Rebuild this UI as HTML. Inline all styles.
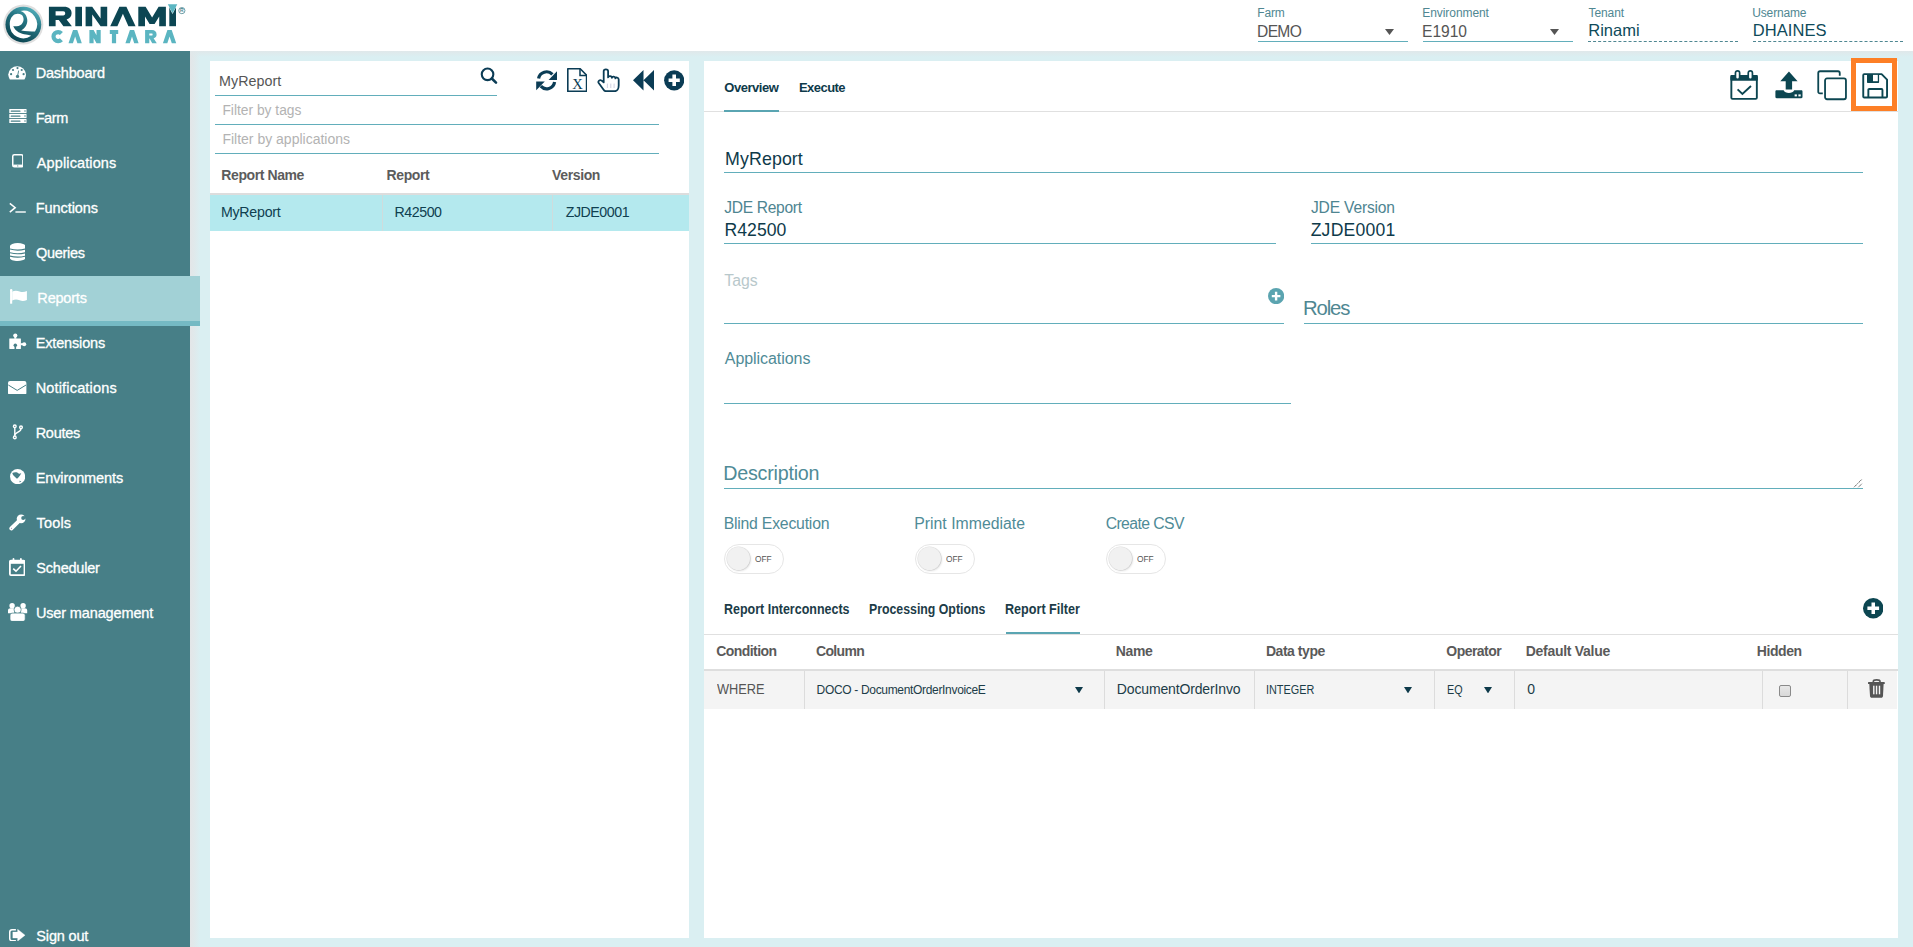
<!DOCTYPE html>
<html><head><meta charset="utf-8"><title>Rinami Cantara - Reports</title>
<style>
html,body{margin:0;padding:0;width:1913px;height:947px;overflow:hidden;background:#fff;font-family:"Liberation Sans",sans-serif;}
.t{position:absolute;white-space:nowrap;line-height:1.15;}
</style></head><body>
<div style="position:absolute;left:0px;top:0px;width:1913px;height:51px;background:#fff;"></div>
<div style="position:absolute;left:190px;top:51px;width:1723px;height:896px;background:#daeff2;"></div>
<div style="position:absolute;left:190px;top:51px;width:10px;height:896px;background:linear-gradient(90deg,#e3e6e8 0%,#e0e9eb 40%,#daeff2 100%);"></div>
<div style="position:absolute;left:190px;top:51px;width:1723px;height:6px;background:linear-gradient(180deg,#e0e8ea,rgba(218,239,242,0));"></div>
<div style="position:absolute;left:0px;top:51px;width:190px;height:896px;background:#477f87;"></div>
<div style="position:absolute;left:0px;top:276px;width:200px;height:45px;background:#a2d1d6;"></div>
<div style="position:absolute;left:0px;top:321px;width:200px;height:5px;background:#75bac4;"></div>
<div style="position:absolute;left:210px;top:61px;width:479px;height:877px;background:#fff;"></div>
<div style="position:absolute;left:704px;top:61px;width:1194px;height:877px;background:#fff;"></div>
<div style="position:absolute;left:1258px;top:41px;width:150px;height:1px;background:#62aebb;"></div>
<div style="position:absolute;left:1423px;top:41px;width:150px;height:1px;background:#62aebb;"></div>
<div style="position:absolute;left:1588px;top:41px;width:150px;height:0;border-top:1px dashed #4f8792"></div>
<div style="position:absolute;left:1753px;top:41px;width:150px;height:0;border-top:1px dashed #4f8792"></div>
<svg style="position:absolute;left:1385px;top:29px;" width="9" height="6" viewBox="0 0 9 6"><path d="M0 0H9L4.5 6Z" fill="#555"/></svg>
<svg style="position:absolute;left:1550px;top:29px;" width="9" height="6" viewBox="0 0 9 6"><path d="M0 0H9L4.5 6Z" fill="#555"/></svg>
<svg style="position:absolute;left:0px;top:0px;" width="190" height="51" viewBox="0 0 190 51">
<defs><linearGradient id="lg" x1="0.8" y1="0" x2="0.25" y2="1"><stop offset="0" stop-color="#56b6c2"/><stop offset="0.4" stop-color="#267684"/><stop offset="1" stop-color="#083f4b"/></linearGradient></defs>
<circle cx="23.35" cy="24.55" r="20" fill="#dfdfdf"/>
<circle cx="23.35" cy="24.55" r="17.9" fill="url(#lg)"/>
<path fill="#fff" d="M21.5 14.8 C24.2 16.8 24.4 21.6 21.6 24.2 C19.6 26 16.4 26.6 13.2 26.3 C15.5 31.5 21 34.2 26 34.6 C28 34.8 29.8 35.2 31.2 35.8 A13.6 13.6 0 0 1 9.75 24.5 C9.75 19 12 15.5 15 14.2 C17.2 13.3 19.8 13.6 21.5 14.8Z"/>
<path fill="#fff" d="M20.5 11 A13.6 13.6 0 0 1 35 31.5 C31 31.4 25.5 31 21.2 30.4 C25.2 28.4 27.6 24.2 27.3 20 C27 15.6 24.5 12 20.5 11Z"/>
<g fill="#0c4653" fill-rule="evenodd">
<path d="M48.9 6.8 H64 C68.8 6.8 71.6 9.4 71.6 13.2 C71.6 16.4 69.6 18.6 66.6 19.4 L71.9 26.2 H63.4 L58.8 19.9 H55.6 V26.2 H48.9 Z M55.6 11.2 H63.2 C64.6 11.2 65.2 12 65.2 13.3 C65.2 14.6 64.6 15.4 63.2 15.4 H55.6 Z"/>
<rect x="75.3" y="6.8" width="6.7" height="19.4"/>
<path d="M85.6 26.2 V6.8 H92.2 L100.6 18.5 V6.8 H107.2 V26.2 H100.6 L92.2 14.5 V26.2 Z"/>
<path d="M110.2 26.2 L119.4 6.8 H126.4 L135.6 26.2 H128.4 L122.9 13.8 L117.4 26.2 Z"/>
<path d="M138.3 26.2 V6.8 H145.6 L152.1 17.5 L158.6 6.8 H165.9 V26.2 H159.2 V16.5 L154.6 24 H149.6 L145 16.5 V26.2 Z"/>
<rect x="169.3" y="6.8" width="6.7" height="19.4"/>
</g>
<path d="M167.2 3.6 H177.9 L172.55 13.9 Z" fill="#fff"/>
<path d="M167.8 4.2 H177.3 L172.55 13.3 Z" fill="#5bb6c2"/>
<circle cx="181.85" cy="10.6" r="3.1" fill="none" stroke="#4a8590" stroke-width="0.8"/>
<text x="181.85" y="12.4" text-anchor="middle" font-family="Liberation Sans" font-weight="700" font-size="5" fill="#4a8590">R</text>
<g fill="#5bb5c1" fill-rule="evenodd">
<path d="M61.4 33.5 A4.55 4.55 0 1 0 61.4 39.7" fill="none" stroke="#5bb5c1" stroke-width="4.2"/>
<path d="M68.5 43.2 L73 30 H77.3 L81.8 43.2 H77.4 L75.15 36.4 L72.9 43.2 Z"/>
<path d="M89.4 43.2 V30 H93.6 L96.5 35.2 V30 H100.7 V43.2 H96.5 L93.6 38 V43.2 Z"/>
<path d="M109.8 30 H118.2 V34 H116.1 V43.2 H111.9 V34 H109.8 Z"/>
<path d="M125.4 43.2 L129.9 30 H134.1 L138.6 43.2 H134.2 L132 36.4 L129.8 43.2 Z"/>
<path d="M145.1 30 H152 C154.8 30 156.6 31.8 156.6 34.4 C156.6 36.4 155.4 37.8 153.6 38.3 L156.8 43.2 H152.2 L149.6 38.6 H149.3 V43.2 H145.1 Z M149.3 33.4 H151.8 C152.4 33.4 152.6 33.8 152.6 34.4 C152.6 35 152.4 35.4 151.8 35.4 H149.3 Z"/>
<path d="M162.9 43.2 L167.4 30 H171.7 L176.2 43.2 H171.8 L169.55 36.4 L167.3 43.2 Z"/>
</g>
</svg>
<svg style="position:absolute;left:8px;top:65px;" width="19" height="15" viewBox="0 0 19 15"><path d="M1.9 14.5 C0.9 13 0.3 11.2 0.3 9.2 A8.9 8.9 0 0 1 18 9.2 C18 11.2 17.4 13 16.4 14.5 Z" fill="#fff"/><g fill="#477f87"><circle cx="5" cy="5" r="1.1"/><circle cx="9.5" cy="3.1" r="1.1"/><circle cx="13.7" cy="5" r="1.1"/><circle cx="3.1" cy="9.2" r="1.1"/><circle cx="15.6" cy="9.2" r="1.1"/><circle cx="9.5" cy="11.4" r="1.65"/><path d="M9 11.4 L10.2 5.6 L11 5.8 L10 11.6Z"/></g></svg>
<svg style="position:absolute;left:8.5px;top:108.8px;" width="18" height="14.5" viewBox="0 0 18 14.5"><rect x="0.3" y="0" width="17.2" height="4.1" fill="#fff"/><rect x="1.7" y="1.55" width="9.8" height="1.1" rx="0.5" fill="#477f87"/><circle cx="16" cy="2.1" r="0.75" fill="#477f87"/><rect x="0.3" y="5" width="17.2" height="4.1" fill="#fff"/><rect x="1.7" y="6.55" width="9.8" height="1.1" rx="0.5" fill="#477f87"/><circle cx="16" cy="7.1" r="0.75" fill="#477f87"/><rect x="0.3" y="10" width="17.2" height="4.1" fill="#fff"/><rect x="1.7" y="11.55" width="9.8" height="1.1" rx="0.5" fill="#477f87"/><circle cx="16" cy="12.1" r="0.75" fill="#477f87"/></svg>
<svg style="position:absolute;left:11.6px;top:154.3px;" width="11.6" height="13.6" viewBox="0 0 11.6 13.6"><rect x="0.75" y="0.75" width="10.1" height="12.1" rx="1.6" fill="none" stroke="#fff" stroke-width="1.5"/><rect x="1.2" y="10.6" width="9.2" height="2.4" fill="#fff"/><circle cx="5.8" cy="11.9" r="0.55" fill="#477f87"/></svg>
<svg style="position:absolute;left:9px;top:202px;" width="17" height="12" viewBox="0 0 17 12"><path d="M0.8 1.3 L6.2 5.7 L0.8 10.1" fill="none" stroke="#fff" stroke-width="1.5"/><rect x="6.4" y="9.3" width="10.4" height="1.4" fill="#fff"/></svg>
<svg style="position:absolute;left:9.5px;top:242.9px;" width="15.4" height="18" viewBox="0 0 15.4 18"><path d="M0 3 A7.7 3 0 0 1 15.4 3 V15.2 C15.4 16.8 12 17.9 7.7 17.9 C3.4 17.9 0 16.8 0 15.2 Z" fill="#fff"/><g fill="none" stroke="#477f87" stroke-width="1.1"><path d="M-0.2 5.9 Q7.7 8.3 15.6 5.9"/><path d="M-0.2 9.7 Q7.7 11.7 15.6 9.7"/><path d="M-0.2 13.1 Q7.7 15.1 15.6 13.1"/></g></svg>
<svg style="position:absolute;left:10.2px;top:289.4px;" width="17.5" height="15" viewBox="0 0 17.5 15"><rect x="0.1" y="1" width="2.1" height="13.7" fill="#fff"/><circle cx="1.15" cy="1.3" r="1.25" fill="#fff"/><path d="M2.2 2.4 C4.8 1.3 7.4 1.5 9.6 2.4 C12 3.4 14.5 3.2 16.9 1.9 V10.9 C14.5 12.2 12 12.3 9.6 11.3 C7.4 10.4 4.8 10.3 2.2 11.4 Z" fill="#fff"/></svg>
<svg style="position:absolute;left:8.8px;top:332.5px;" width="18" height="16.5" viewBox="0 0 18 16.5"><g fill="#fff"><rect x="0.3" y="5.4" width="11.6" height="10.5" rx="0.4"/><circle cx="6.3" cy="2.5" r="2.1"/><rect x="5.3" y="3.5" width="2" height="2.2"/><circle cx="15.2" cy="11.2" r="2"/><rect x="11.6" y="10.2" width="2.4" height="2"/></g><g fill="#477f87"><circle cx="6.3" cy="12.3" r="1.75"/><rect x="5.5" y="12.6" width="1.6" height="3.6"/></g></svg>
<svg style="position:absolute;left:8.2px;top:380.7px;" width="18.4" height="13.8" viewBox="0 0 18.4 13.8"><rect x="0" y="0" width="18.4" height="13.8" rx="2" fill="#fff"/><path d="M0.3 4 L9.2 9.4 L18.1 4" fill="none" stroke="#477f87" stroke-width="1"/></svg>
<svg style="position:absolute;left:11.5px;top:424px;" width="12" height="16" viewBox="0 0 12 16"><g fill="none" stroke="#fff" stroke-width="1.4"><circle cx="2.8" cy="2.3" r="1.35"/><circle cx="9" cy="3.3" r="1.35"/><circle cx="2.8" cy="13.4" r="1.35"/><path d="M2.8 3.65 V12.05"/><path d="M9 4.65 C9 8.2 2.9 8.4 2.8 11"/></g></svg>
<svg style="position:absolute;left:9.9px;top:469px;" width="15.3" height="15.3" viewBox="0 0 15.3 15.3"><circle cx="7.65" cy="7.65" r="7.6" fill="#fff"/><path d="M2.3 3.9 C3.5 3.3 5.2 3 6.5 3.3 C7.6 3.6 8.4 4.6 9.3 4.8 C10 4.9 10.6 4.2 11.3 4 C10.6 5.5 9.8 6.9 8.8 7.9 C8.2 8.6 7.6 9.4 7 9.8 C6.4 9.2 5.8 8.6 5.3 8.2 C4.6 7.6 3.9 7.2 3.5 6.6 C3 5.8 2.6 4.8 2.3 3.9Z" fill="#477f87"/><path d="M9.5 11.8 L11.3 12.3 L9.7 13.5Z" fill="#477f87"/></svg>
<svg style="position:absolute;left:9px;top:514px;" width="17.5" height="17" viewBox="0 0 17.5 17"><circle cx="12.1" cy="4.8" r="4.4" fill="#fff"/><path d="M11.6 5.4 L2.3 14.5" stroke="#fff" stroke-width="3.9" stroke-linecap="round"/><circle cx="14.2" cy="3.9" r="2" fill="#477f87"/><path d="M14.2 3.9 L16.4 0.6 L18.5 2.2 L18 5.2Z" fill="#477f87"/><circle cx="2.5" cy="14.3" r="0.55" fill="#9a86b0"/></svg>
<svg style="position:absolute;left:8.6px;top:557.5px;" width="16.4" height="18" viewBox="0 0 16.4 18"><rect x="0.9" y="2.6" width="14.6" height="14.5" rx="1" fill="none" stroke="#fff" stroke-width="1.8"/><rect x="0.9" y="2.6" width="14.6" height="3.2" fill="#fff"/><rect x="3.6" y="0" width="1.8" height="4.4" rx="0.9" fill="#fff"/><rect x="11" y="0" width="1.8" height="4.4" rx="0.9" fill="#fff"/><path d="M4.2 10.6 L7 13.2 L12 8" fill="none" stroke="#fff" stroke-width="1.6"/></svg>
<svg style="position:absolute;left:8px;top:602.7px;" width="19.5" height="18.6" viewBox="0 0 19.5 18.6"><g fill="#fff"><circle cx="4.1" cy="2.8" r="2.7"/><circle cx="15.1" cy="2.8" r="2.7"/><path d="M0 10.3 V7.6 C0 6.2 1 5.3 2.4 5.3 H6.2 V10.3Z"/><path d="M19.2 10.3 V7.6 C19.2 6.2 18.2 5.3 16.8 5.3 H13 V10.3Z"/></g><g fill="#fff" stroke="#477f87" stroke-width="0.7"><circle cx="9.6" cy="6.8" r="3.6"/><path d="M2 12.6 C2 11 3.2 10.1 4.8 10.1 H14.4 C16 10.1 17.2 11 17.2 12.6 V15.9 C17.2 17.4 16.2 18.4 14.7 18.4 H4.5 C3 18.4 2 17.4 2 15.9Z"/></g></svg>
<svg style="position:absolute;left:9px;top:928.8px;" width="16.5" height="12.5" viewBox="0 0 16.5 12.5"><path d="M6.9 0.75 H3 C1.6 0.75 0.75 1.6 0.75 3 V9.5 C0.75 10.9 1.6 11.75 3 11.75 H6.9" fill="none" stroke="#fff" stroke-width="1.5"/><path d="M3.8 3.1 H8.6 V0.2 L16.1 6.2 L8.6 12.2 V9.1 H3.8 Z" fill="#fff" stroke="#fff" stroke-width="0.3" stroke-linejoin="round"/></svg>
<div style="position:absolute;left:215px;top:95px;width:282px;height:1px;background:#62aebb;"></div>
<div style="position:absolute;left:215px;top:124px;width:444px;height:1px;background:#62aebb;"></div>
<div style="position:absolute;left:215px;top:153px;width:444px;height:1px;background:#62aebb;"></div>
<svg style="position:absolute;left:479.5px;top:66.5px;" width="18" height="18" viewBox="0 0 18 18"><circle cx="7.55" cy="7.3" r="5.8" fill="none" stroke="#0b3c55" stroke-width="2.1"/><path d="M11.8 11.5 L16 15.6" stroke="#0b3c55" stroke-width="2.6" stroke-linecap="round"/></svg>
<svg style="position:absolute;left:536px;top:70px;" width="21.2" height="20.6" viewBox="0 0 21.2 20.6"><path d="M2.6 8.6 A8 8 0 0 1 16.4 4.4" fill="none" stroke="#0b3c55" stroke-width="3.2"/><path d="M21 1.2 V10 H12.6Z" fill="#0b3c55"/><path d="M18.6 12 A8 8 0 0 1 4.8 16.2" fill="none" stroke="#0b3c55" stroke-width="3.2"/><path d="M0.2 20.2 V11.6 H8.8Z" fill="#0b3c55"/></svg>
<svg style="position:absolute;left:567px;top:68px;" width="20.4" height="24.2" viewBox="0 0 20.4 24.2"><path d="M0.8 0.8 H13.2 L19.6 7.2 V23.4 H0.8Z" fill="none" stroke="#0b3c55" stroke-width="1.6" stroke-linejoin="round"/><path d="M13 0.8 V7.4 H19.6" fill="none" stroke="#0b3c55" stroke-width="1.5"/><text x="10.4" y="20.8" text-anchor="middle" font-family="Liberation Serif" font-size="14.6" fill="#0b3c55">X</text></svg>
<svg style="position:absolute;left:597px;top:68px;" width="23" height="24.4" viewBox="0 0 23 24.4"><path d="M6.7 3.2 C6.7 0.8 11.1 0.8 11.1 3.2 V9.4 C11.3 7.6 14.9 7.6 14.9 9.8 C15.1 8.2 18.4 8.2 18.4 10.4 C18.6 9 21.7 9.2 21.7 11.4 V17.6 C21.7 20.6 20.2 23.2 17.8 23.2 H8.8 C7.8 23.2 7.2 22.6 6.6 21.7 L1.7 15 C0.6 13.4 2.8 11.2 4.6 12.6 L6.7 14.4 Z" fill="none" stroke="#0b3c55" stroke-width="1.8" stroke-linejoin="round"/><path d="M10.4 15.6 V20 M13.8 15.6 V20 M17.1 15.6 V20" stroke="#c9c9dc" stroke-width="0.9"/></svg>
<svg style="position:absolute;left:633px;top:70px;" width="21" height="20.6" viewBox="0 0 21 20.6"><path d="M0 10.3 L10.5 0 V20.6Z M10.5 10.3 L21 0 V20.6Z" fill="#0b3c55"/></svg>
<svg style="position:absolute;left:664px;top:70px;" width="20.4" height="20.6" viewBox="0 0 20.4 20.6"><circle cx="10.2" cy="10.3" r="10.1" fill="#0b3c55"/><path d="M8.4 4.6 H12 V8.5 H15.8 V12.1 H12 V16 H8.4 V12.1 H4.6 V8.5 H8.4Z" fill="#fff"/></svg>
<div style="position:absolute;left:210px;top:193px;width:479px;height:2px;background:#dddddd;"></div>
<div style="position:absolute;left:210px;top:195px;width:479px;height:36px;background:#b4e9ee;"></div>
<div style="position:absolute;left:382px;top:195px;width:1px;height:36px;background:#cfdcdc;"></div>
<div style="position:absolute;left:552px;top:195px;width:1px;height:36px;background:#cfdcdc;"></div>
<div style="position:absolute;left:704px;top:111px;width:1194px;height:1px;background:#e0e0e0;"></div>
<div style="position:absolute;left:724px;top:110px;width:55px;height:2px;background:#5aa5b2;"></div>
<svg style="position:absolute;left:1729.5px;top:70px;" width="28.4" height="30.4" viewBox="0 0 28.4 30.4"><rect x="1.35" y="6.05" width="25.5" height="22.8" rx="1.2" fill="none" stroke="#0c4651" stroke-width="1.9"/><rect x="0.4" y="5.1" width="27.4" height="5.7" rx="1" fill="#0c4651"/><rect x="5.45" y="0.85" width="4.2" height="8.4" rx="2.1" fill="#fff" stroke="#0c4651" stroke-width="1.7"/><rect x="18.25" y="0.85" width="4.2" height="8.4" rx="2.1" fill="#fff" stroke="#0c4651" stroke-width="1.7"/><path d="M7.6 19.4 L12.4 24 L21 16" fill="none" stroke="#0c4651" stroke-width="1.9"/></svg>
<svg style="position:absolute;left:1774.5px;top:70.5px;" width="28" height="28" viewBox="0 0 28 28"><path d="M13.95 0.4 L22.6 10.2 H17.1 V18.4 H10.7 V10.2 H5.3 Z" fill="#0c4651"/><path d="M1.6 19.3 H8.6 C9.4 21 11.4 22 13.9 22 C16.4 22 18.4 21 19.2 19.3 H26.3 C27 19.3 27.5 19.8 27.5 20.5 V26 C27.5 26.7 27 27.2 26.3 27.2 H1.6 C0.9 27.2 0.4 26.7 0.4 26 V20.5 C0.4 19.8 0.9 19.3 1.6 19.3 Z" fill="#0c4651"/><rect x="19.6" y="23.4" width="2.3" height="2" fill="#fff"/><rect x="23.4" y="23.4" width="2.3" height="2" fill="#fff"/></svg>
<svg style="position:absolute;left:1817px;top:69.5px;" width="31" height="31" viewBox="0 0 31 31"><path d="M5.8 23.45 H3 C1.9 23.45 1.25 22.8 1.25 21.7 V3 C1.25 1.9 1.9 1.25 3 1.25 H21 C22.1 1.25 22.75 1.9 22.75 3 V5.8" fill="none" stroke="#0c4651" stroke-width="1.8"/><rect x="8.05" y="8.45" width="20.9" height="20.8" rx="2" fill="none" stroke="#0c4651" stroke-width="1.8"/></svg>
<div style="position:absolute;left:1851px;top:58px;width:36px;height:43px;border:5px solid #fd7f26"></div>
<svg style="position:absolute;left:1862px;top:72.5px;" width="27" height="26" viewBox="0 0 27 26"><path d="M1.25 2.2 C1.25 1.6 1.6 1.15 2.2 1.15 H19.6 L25.05 6.6 V23.4 C25.05 24 24.6 24.45 24 24.45 H2.2 C1.6 24.45 1.25 24 1.25 23.4 Z" fill="none" stroke="#0c4651" stroke-width="1.9" stroke-linejoin="round"/><path d="M5 1 H17.1 V9.1 C17.1 9.7 16.7 10.1 16.1 10.1 H6 C5.4 10.1 5 9.7 5 9.1 Z" fill="#0c4651"/><rect x="11" y="1.9" width="4.8" height="6.3" fill="#fff"/><path d="M6.35 24.5 V16.9 C6.35 16.3 6.7 15.95 7.3 15.95 H19.5 C20.1 15.95 20.45 16.3 20.45 16.9 V24.5" fill="none" stroke="#0c4651" stroke-width="1.9"/></svg>
<div style="position:absolute;left:724px;top:172px;width:1139px;height:1px;background:#62aebb;"></div>
<div style="position:absolute;left:724px;top:243px;width:552px;height:1px;background:#62aebb;"></div>
<div style="position:absolute;left:1311px;top:243px;width:552px;height:1px;background:#62aebb;"></div>
<div style="position:absolute;left:724px;top:323px;width:560px;height:1px;background:#62aebb;"></div>
<div style="position:absolute;left:1304px;top:323px;width:559px;height:1px;background:#62aebb;"></div>
<div style="position:absolute;left:724px;top:403px;width:567px;height:1px;background:#62aebb;"></div>
<div style="position:absolute;left:724px;top:488px;width:1139px;height:1px;background:#62aebb;"></div>
<svg style="position:absolute;left:1267.5px;top:288px;" width="16.2" height="16.2" viewBox="0 0 16.2 16.2"><circle cx="8.1" cy="8.1" r="8.1" fill="#5ba4b0"/><path d="M6.9 3.8 H9.3 V6.9 H12.4 V9.3 H9.3 V12.4 H6.9 V9.3 H3.8 V6.9 H6.9Z" fill="#fff"/></svg>
<svg style="position:absolute;left:1852px;top:478px;" width="11" height="10" viewBox="0 0 11 10"><path d="M2 9.2 L10 1.2 M6.4 9.2 L10 5.6" stroke="#555" stroke-width="1" stroke-dasharray="1.2 0.6"/></svg>
<div style="position:absolute;left:724.2px;top:544.2px;width:57.5px;height:28px;border:1px solid #e6e6e6;border-radius:15px;background:#fff"></div>
<div style="position:absolute;left:727.3000000000001px;top:547px;width:23px;height:23px;border-radius:50%;background:#f1f1f1;box-shadow:1px 1px 2px rgba(0,0,0,0.12),0 0 0 0.6px #e2e2e2"></div>
<div style="position:absolute;left:915.2px;top:544.2px;width:57.5px;height:28px;border:1px solid #e6e6e6;border-radius:15px;background:#fff"></div>
<div style="position:absolute;left:918.3000000000001px;top:547px;width:23px;height:23px;border-radius:50%;background:#f1f1f1;box-shadow:1px 1px 2px rgba(0,0,0,0.12),0 0 0 0.6px #e2e2e2"></div>
<div style="position:absolute;left:1106.2px;top:544.2px;width:57.5px;height:28px;border:1px solid #e6e6e6;border-radius:15px;background:#fff"></div>
<div style="position:absolute;left:1109.3px;top:547px;width:23px;height:23px;border-radius:50%;background:#f1f1f1;box-shadow:1px 1px 2px rgba(0,0,0,0.12),0 0 0 0.6px #e2e2e2"></div>
<div style="position:absolute;left:704px;top:634px;width:1194px;height:1px;background:#e0e0e0;"></div>
<div style="position:absolute;left:1006px;top:631.8px;width:73.5px;height:2.4px;background:#5aa5b2;"></div>
<svg style="position:absolute;left:1862.7px;top:598px;" width="20.5" height="20.5" viewBox="0 0 20.5 20.5"><circle cx="10.25" cy="10.25" r="10.25" fill="#0c4651"/><path d="M8.5 4.4 H12 V8.5 H16.1 V12 H12 V16.1 H8.5 V12 H4.4 V8.5 H8.5Z" fill="#fff"/></svg>
<div style="position:absolute;left:704px;top:669px;width:1194px;height:2px;background:#dedede;"></div>
<div style="position:absolute;left:704px;top:671px;width:1193px;height:38px;background:#f4f4f4;"></div>
<div style="position:absolute;left:804px;top:671px;width:1px;height:38px;background:#dcdcdc;"></div>
<div style="position:absolute;left:1104px;top:671px;width:1px;height:38px;background:#dcdcdc;"></div>
<div style="position:absolute;left:1254px;top:671px;width:1px;height:38px;background:#dcdcdc;"></div>
<div style="position:absolute;left:1434px;top:671px;width:1px;height:38px;background:#dcdcdc;"></div>
<div style="position:absolute;left:1514px;top:671px;width:1px;height:38px;background:#dcdcdc;"></div>
<div style="position:absolute;left:1762px;top:671px;width:1px;height:38px;background:#dcdcdc;"></div>
<div style="position:absolute;left:1847px;top:671px;width:1px;height:38px;background:#dcdcdc;"></div>
<svg style="position:absolute;left:1074.5px;top:686.6px;" width="8" height="6.4" viewBox="0 0 8 6.4"><path d="M0 0 H8 L4 6.4Z" fill="#0e3a4a"/></svg>
<svg style="position:absolute;left:1404.4px;top:686.6px;" width="8" height="6.4" viewBox="0 0 8 6.4"><path d="M0 0 H8 L4 6.4Z" fill="#0e3a4a"/></svg>
<svg style="position:absolute;left:1484.3px;top:686.6px;" width="8" height="6.4" viewBox="0 0 8 6.4"><path d="M0 0 H8 L4 6.4Z" fill="#0e3a4a"/></svg>
<div style="position:absolute;left:1779.2px;top:685.2px;width:9.6px;height:9.6px;border:1px solid #8a8a8a;border-radius:2px;background:linear-gradient(#e8e8e8,#d8d8d8)"></div>
<svg style="position:absolute;left:1868px;top:679px;" width="17" height="19" viewBox="0 0 17 19"><path d="M5.3 3.6 V2.4 C5.3 0.3 12 0.3 12 2.4 V3.6" fill="none" stroke="#555" stroke-width="1.6"/><rect x="0" y="3.1" width="16.8" height="2" rx="0.6" fill="#555"/><path d="M1.3 5 H15.6 L15 17 C14.9 18.2 14.2 18.8 13 18.8 H3.9 C2.7 18.8 2.1 18.2 2 17 Z" fill="#555"/><rect x="5.1" y="6.7" width="1.4" height="8.6" fill="#f4f4f4"/><rect x="7.85" y="6.7" width="1.4" height="8.6" fill="#f4f4f4"/><rect x="10.8" y="6.7" width="1.4" height="8.6" fill="#f4f4f4"/></svg>
<div class=t style="left:1257.35px;top:7.01px;font-size:12px;font-weight:400;color:#4f8792;letter-spacing:-0.225px;">Farm</div>
<div class=t style="left:1257.08px;top:22.70px;font-size:15.6px;font-weight:400;color:#555;letter-spacing:-0.695px;">DEMO</div>
<div class=t style="left:1422.35px;top:7.01px;font-size:12px;font-weight:400;color:#4f8792;letter-spacing:-0.080px;">Environment</div>
<div class=t style="left:1422.08px;top:22.70px;font-size:15.6px;font-weight:400;color:#555;letter-spacing:-0.059px;">E1910</div>
<div class=t style="left:1588.45px;top:7.01px;font-size:12px;font-weight:400;color:#4f8792;letter-spacing:-0.055px;">Tenant</div>
<div class=t style="left:1588.21px;top:20.70px;font-size:16.5px;font-weight:400;color:#0e4a5a;letter-spacing:0.007px;">Rinami</div>
<div class=t style="left:1752.30px;top:7.01px;font-size:12px;font-weight:400;color:#4f8792;letter-spacing:-0.170px;">Username</div>
<div class=t style="left:1752.71px;top:20.70px;font-size:16.5px;font-weight:400;color:#0e4a5a;letter-spacing:0.092px;">DHAINES</div>
<div class=t style="left:35.67px;top:65.00px;font-size:14.5px;font-weight:400;color:#fff;letter-spacing:-0.193px;-webkit-text-stroke:0.3px #fff">Dashboard</div>
<div class=t style="left:35.67px;top:110.00px;font-size:14.5px;font-weight:400;color:#fff;letter-spacing:-0.411px;-webkit-text-stroke:0.3px #fff">Farm</div>
<div class=t style="left:36.80px;top:155.00px;font-size:14.5px;font-weight:400;color:#fff;letter-spacing:0.118px;-webkit-text-stroke:0.3px #fff">Applications</div>
<div class=t style="left:35.67px;top:200.00px;font-size:14.5px;font-weight:400;color:#fff;letter-spacing:-0.053px;-webkit-text-stroke:0.3px #fff">Functions</div>
<div class=t style="left:36.12px;top:245.00px;font-size:14.5px;font-weight:400;color:#fff;letter-spacing:-0.326px;-webkit-text-stroke:0.3px #fff">Queries</div>
<div class=t style="left:37.37px;top:290.00px;font-size:14.5px;font-weight:400;color:#fff;letter-spacing:-0.197px;-webkit-text-stroke:0.3px #fff">Reports</div>
<div class=t style="left:35.67px;top:335.00px;font-size:14.5px;font-weight:400;color:#fff;letter-spacing:-0.154px;-webkit-text-stroke:0.3px #fff">Extensions</div>
<div class=t style="left:35.67px;top:380.00px;font-size:14.5px;font-weight:400;color:#fff;letter-spacing:0.170px;-webkit-text-stroke:0.3px #fff">Notifications</div>
<div class=t style="left:35.67px;top:425.00px;font-size:14.5px;font-weight:400;color:#fff;letter-spacing:-0.276px;-webkit-text-stroke:0.3px #fff">Routes</div>
<div class=t style="left:35.67px;top:470.00px;font-size:14.5px;font-weight:400;color:#fff;letter-spacing:-0.105px;-webkit-text-stroke:0.3px #fff">Environments</div>
<div class=t style="left:36.57px;top:515.00px;font-size:14.5px;font-weight:400;color:#fff;letter-spacing:0.148px;-webkit-text-stroke:0.3px #fff">Tools</div>
<div class=t style="left:36.35px;top:560.00px;font-size:14.5px;font-weight:400;color:#fff;letter-spacing:-0.222px;-webkit-text-stroke:0.3px #fff">Scheduler</div>
<div class=t style="left:35.89px;top:605.00px;font-size:14.5px;font-weight:400;color:#fff;letter-spacing:-0.132px;-webkit-text-stroke:0.3px #fff">User management</div>
<div class=t style="left:36.35px;top:928.00px;font-size:14.5px;font-weight:400;color:#fff;letter-spacing:-0.177px;-webkit-text-stroke:0.3px #fff">Sign out</div>
<div class=t style="left:219.08px;top:72.91px;font-size:14.3px;font-weight:400;color:#555;letter-spacing:0.014px;">MyReport</div>
<div class=t style="left:222.42px;top:102.92px;font-size:13.8px;font-weight:400;color:#b3b3b3;letter-spacing:0.001px;">Filter by tags</div>
<div class=t style="left:222.41px;top:130.90px;font-size:14px;font-weight:400;color:#b3b3b3;letter-spacing:-0.001px;">Filter by applications</div>
<div class=t style="left:221.32px;top:166.90px;font-size:14px;font-weight:700;color:#5c5c5c;letter-spacing:-0.404px;">Report Name</div>
<div class=t style="left:386.52px;top:166.90px;font-size:14px;font-weight:700;color:#5c5c5c;letter-spacing:-0.376px;">Report</div>
<div class=t style="left:552.00px;top:166.90px;font-size:14px;font-weight:700;color:#5c5c5c;letter-spacing:-0.361px;">Version</div>
<div class=t style="left:220.89px;top:204.00px;font-size:14.2px;font-weight:400;color:#0f4050;letter-spacing:-0.225px;">MyReport</div>
<div class=t style="left:394.49px;top:204.00px;font-size:14.2px;font-weight:400;color:#0f4050;letter-spacing:-0.434px;">R42500</div>
<div class=t style="left:565.76px;top:204.00px;font-size:14.2px;font-weight:400;color:#0f4050;letter-spacing:-0.466px;">ZJDE0001</div>
<div class=t style="left:724.29px;top:81.01px;font-size:13px;font-weight:700;color:#0e3a4a;letter-spacing:-0.466px;">Overview</div>
<div class=t style="left:798.89px;top:81.01px;font-size:13px;font-weight:700;color:#0e3a4a;letter-spacing:-0.525px;">Execute</div>
<div class=t style="left:725.11px;top:148.82px;font-size:17.8px;font-weight:400;color:#0e3a4a;letter-spacing:0.090px;">MyReport</div>
<div class=t style="left:724.36px;top:198.90px;font-size:15.6px;font-weight:400;color:#4e8591;letter-spacing:-0.331px;">JDE Report</div>
<div class=t style="left:724.62px;top:219.80px;font-size:17.6px;font-weight:400;color:#0e3a4a;letter-spacing:0.010px;">R42500</div>
<div class=t style="left:1310.96px;top:198.90px;font-size:15.6px;font-weight:400;color:#4e8591;letter-spacing:-0.174px;">JDE Version</div>
<div class=t style="left:1310.65px;top:219.80px;font-size:17.6px;font-weight:400;color:#0e3a4a;letter-spacing:0.222px;">ZJDE0001</div>
<div class=t style="left:724.35px;top:272.12px;font-size:15.8px;font-weight:400;color:#b8c8cb;letter-spacing:-0.019px;">Tags</div>
<div class=t style="left:1303.11px;top:297.12px;font-size:20.3px;font-weight:400;color:#4f8792;letter-spacing:-1.152px;">Roles</div>
<div class=t style="left:724.80px;top:350.21px;font-size:16px;font-weight:400;color:#4f8b97;letter-spacing:-0.057px;">Applications</div>
<div class=t style="left:723.26px;top:461.91px;font-size:19.7px;font-weight:400;color:#4f8b97;letter-spacing:-0.226px;">Description</div>
<div class=t style="left:723.67px;top:515.01px;font-size:15.8px;font-weight:400;color:#4f8b97;letter-spacing:-0.219px;">Blind Execution</div>
<div class=t style="left:914.17px;top:515.01px;font-size:15.8px;font-weight:400;color:#4f8b97;letter-spacing:0.018px;">Print Immediate</div>
<div class=t style="left:1105.66px;top:515.01px;font-size:15.8px;font-weight:400;color:#4f8b97;letter-spacing:-0.610px;">Create CSV</div>
<div class=t style="left:755.41px;top:553.01px;font-size:9.6px;font-weight:400;color:#555;letter-spacing:0.000px;transform:scaleX(0.8704);transform-origin:0 0;">OFF</div>
<div class=t style="left:946.41px;top:553.01px;font-size:9.6px;font-weight:400;color:#555;letter-spacing:0.000px;transform:scaleX(0.8704);transform-origin:0 0;">OFF</div>
<div class=t style="left:1137.41px;top:553.01px;font-size:9.6px;font-weight:400;color:#555;letter-spacing:0.000px;transform:scaleX(0.8704);transform-origin:0 0;">OFF</div>
<div class=t style="left:723.92px;top:602.01px;font-size:13.8px;font-weight:700;color:#1c3c48;letter-spacing:0.000px;transform:scaleX(0.9044);transform-origin:0 0;">Report Interconnects</div>
<div class=t style="left:869.03px;top:602.01px;font-size:13.8px;font-weight:700;color:#1c3c48;letter-spacing:0.000px;transform:scaleX(0.8923);transform-origin:0 0;">Processing Options</div>
<div class=t style="left:1004.91px;top:602.01px;font-size:13.8px;font-weight:700;color:#1c3c48;letter-spacing:0.000px;transform:scaleX(0.9131);transform-origin:0 0;">Report Filter</div>
<div class=t style="left:716.16px;top:642.90px;font-size:14px;font-weight:700;color:#5a5a5a;letter-spacing:-0.557px;">Condition</div>
<div class=t style="left:815.96px;top:642.90px;font-size:14px;font-weight:700;color:#5a5a5a;letter-spacing:-0.635px;">Column</div>
<div class=t style="left:1115.72px;top:642.90px;font-size:14px;font-weight:700;color:#5a5a5a;letter-spacing:-0.360px;">Name</div>
<div class=t style="left:1265.92px;top:642.90px;font-size:14px;font-weight:700;color:#5a5a5a;letter-spacing:-0.459px;">Data type</div>
<div class=t style="left:1446.36px;top:642.90px;font-size:14px;font-weight:700;color:#5a5a5a;letter-spacing:-0.541px;">Operator</div>
<div class=t style="left:1525.72px;top:642.90px;font-size:14px;font-weight:700;color:#5a5a5a;letter-spacing:-0.286px;">Default Value</div>
<div class=t style="left:1756.72px;top:642.90px;font-size:14px;font-weight:700;color:#5a5a5a;letter-spacing:-0.409px;">Hidden</div>
<div class=t style="left:716.60px;top:681.01px;font-size:14px;font-weight:400;color:#555;letter-spacing:0.000px;transform:scaleX(0.9132);transform-origin:0 0;">WHERE</div>
<div class=t style="left:816.55px;top:684.01px;font-size:12px;font-weight:400;color:#1c3c48;letter-spacing:-0.324px;">DOCO - DocumentOrderInvoiceE</div>
<div class=t style="left:1116.81px;top:681.01px;font-size:14px;font-weight:400;color:#1c3c48;letter-spacing:-0.145px;">DocumentOrderInvo</div>
<div class=t style="left:1266.30px;top:684.01px;font-size:12px;font-weight:400;color:#1c3c48;letter-spacing:0.000px;transform:scaleX(0.9054);transform-origin:0 0;">INTEGER</div>
<div class=t style="left:1446.75px;top:684.01px;font-size:12px;font-weight:400;color:#1c3c48;letter-spacing:0.000px;transform:scaleX(0.8995);transform-origin:0 0;">EQ</div>
<div class=t style="left:1527.16px;top:680.60px;font-size:14px;font-weight:400;color:#1c3c48;letter-spacing:0.000px;">0</div>
</body></html>
